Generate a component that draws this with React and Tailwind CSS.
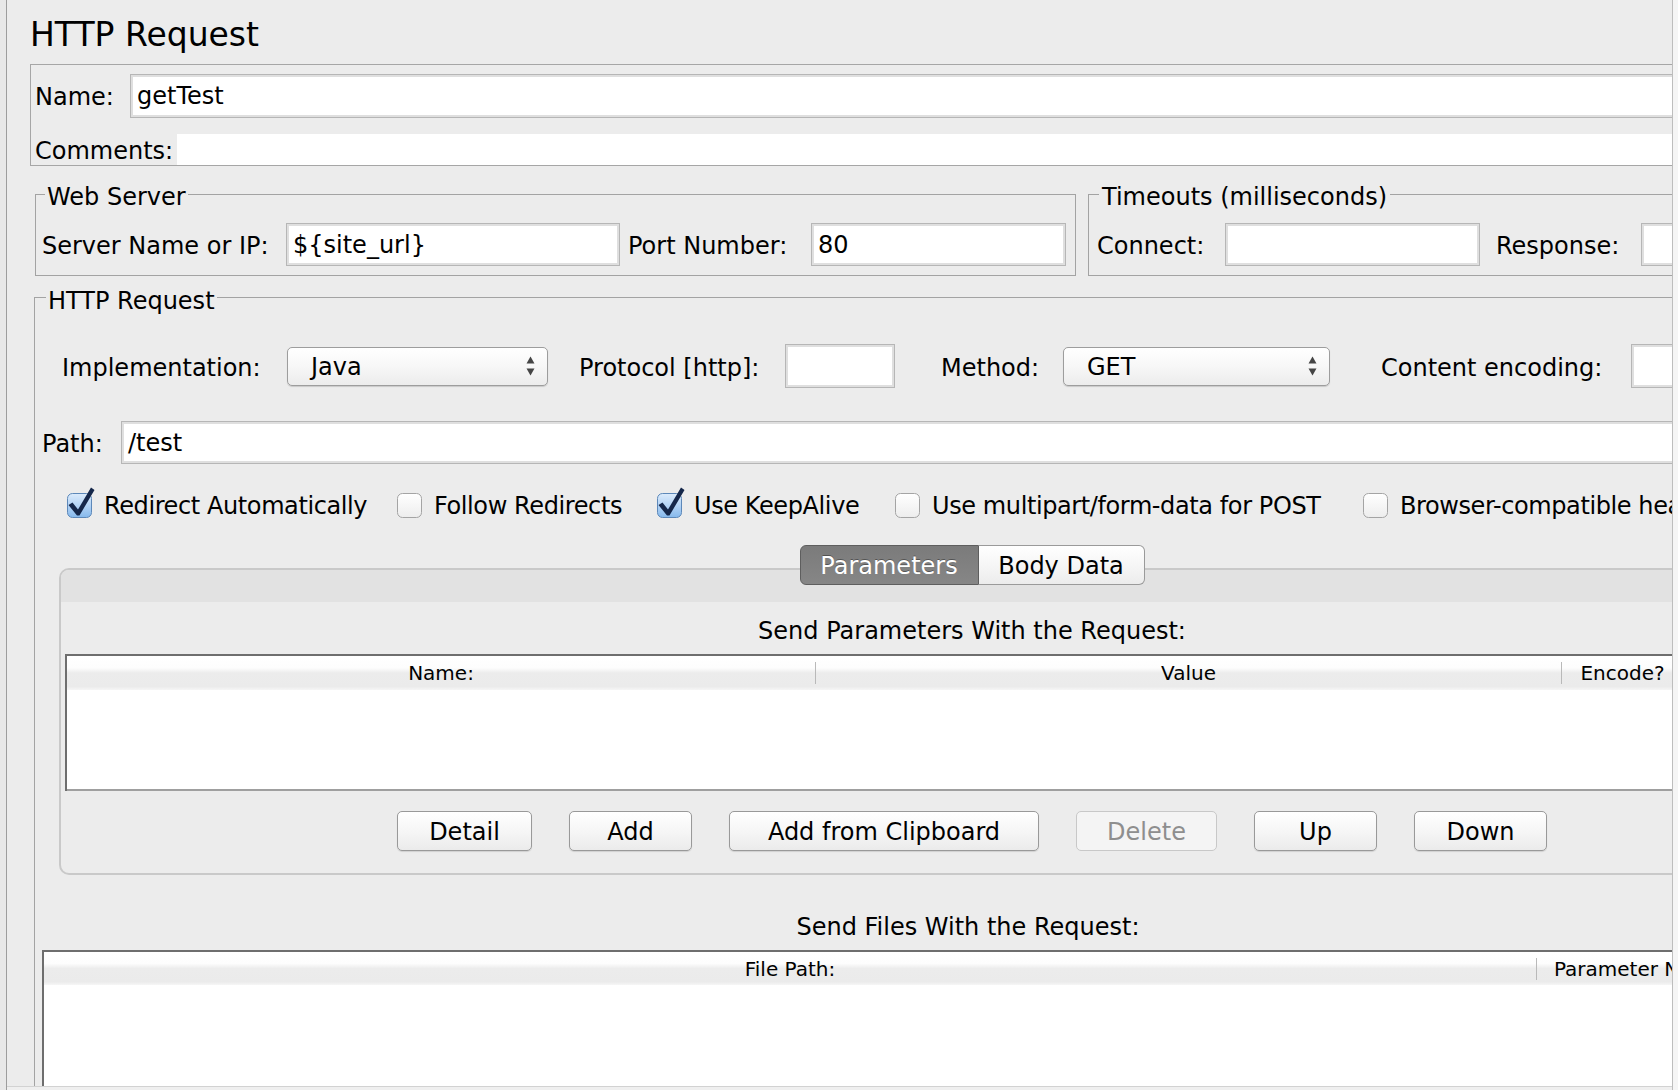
import { useId } from 'react';

const FONT = "font-['DejaVu_Sans',sans-serif]";

function TextField({ value = '', className = '' }) {
  return (
    <div className={`flex shrink-0 items-center border border-[#b6b6b6] bg-white pl-[6px] shadow-[inset_0_0_0_2px_#dfdfdf] ${className}`}>
      <span className="whitespace-nowrap">{value}</span>
    </div>
  );
}

function Select({ value, className = '' }) {
  return (
    <div className={`flex shrink-0 items-center justify-between rounded-[5px] border border-[#9d9d9d] bg-[linear-gradient(#ffffff,#f7f7f7_50%,#ececec)] pl-[23px] pr-[12px] shadow-[0_1px_1px_rgba(0,0,0,0.15)] ${className}`}>
      <span className="pt-[2px]">{value}</span>
      <svg width="9" height="20" viewBox="0 0 9 20">
        <polygon points="0.5,7.5 4.5,0.5 8.5,7.5" fill="#454545" />
        <polygon points="0.5,12.5 4.5,19.5 8.5,12.5" fill="#454545" />
      </svg>
    </div>
  );
}

function CheckBox({ checked }) {
  const id = useId();
  return (
    <svg width="25" height="25" viewBox="0 0 25 25" className="shrink-0 overflow-visible">
      <defs>
        <linearGradient id={id} x1="0" y1="0" x2="0" y2="1">
          {checked ? (
            <>
              <stop offset="0" stopColor="#dcebfb" />
              <stop offset="0.5" stopColor="#b3d3f5" />
              <stop offset="1" stopColor="#86b9ec" />
            </>
          ) : (
            <>
              <stop offset="0" stopColor="#ffffff" />
              <stop offset="1" stopColor="#ededed" />
            </>
          )}
        </linearGradient>
      </defs>
      <rect x="0.5" y="0.5" width="24" height="24" rx="5" fill={`url(#${id})`} stroke={checked ? '#5d88b9' : '#a4a4a4'} />
      {checked && <path d="M1.5 12 L5.5 9.5 L11 16.5 L24 -5.5 L27.5 -3 L12.5 22.5 L10 22.5 Z" fill="#15274a" />}
    </svg>
  );
}

function Option({ checked, label, className = '' }) {
  return (
    <div className={`flex shrink-0 items-center gap-[12px] whitespace-nowrap ${className}`}>
      <CheckBox checked={checked} />
      <span className="tracking-[-0.4px]">{label}</span>
    </div>
  );
}

function Button({ label, className = '', disabled }) {
  return (
    <div
      className={`flex h-[40px] shrink-0 items-center justify-center rounded-[5px] border pt-[2px] ${
        disabled
          ? 'border-[#c8c8c8] bg-[#f4f4f4] text-[#8e8e8e]'
          : 'border-[#999999] bg-[linear-gradient(#ffffff,#f5f5f5_55%,#ebebeb)] shadow-[0_1px_1px_rgba(0,0,0,0.12)]'
      } ${className}`}
    >
      {label}
    </div>
  );
}

const headerBg = 'bg-[linear-gradient(#ffffff_0%,#fdfdfd_35%,#ececec_50%,#ebebeb_90%,#f6f6f6_100%)]';

function ColSep() {
  return <div className="h-[22px] w-px shrink-0 bg-[#b9b9b9]" />;
}

export default function App() {
  return (
    <div className={`flex h-[1090px] w-[1678px] overflow-hidden bg-[#ececec] text-[24px] leading-[28px] text-black ${FONT}`}>
      <div className="w-[6px] shrink-0 bg-[#e8e8e8]" />
      <div className="w-px shrink-0 bg-[#9d9d9d]" />

      <div className="flex w-[1665px] shrink-0 flex-col">
        <div className="h-[1086px] overflow-hidden">
          <div className="w-[1937px]">
            {/* Title */}
            <div className="h-[55px] pl-[23px] pt-[15px] text-[33px] leading-[40px]">HTTP Request</div>

            {/* Name / comments */}
            <div className="ml-[23px] mt-[9px] w-[1884px] border border-[#a6a6a6] pl-[4px] pt-[9px]">
              <div className="flex h-[44px] items-center">
                <span className="w-[95px] shrink-0 pt-[2px]">Name:</span>
                <TextField value="getTest" className="h-full flex-1" />
              </div>
              <div className="mt-[16px] flex h-[31px] items-center">
                <span className="w-[142px] shrink-0 pt-[2px]">Comments:</span>
                <div className="h-full flex-1 bg-white" />
              </div>
            </div>

            {/* Web server + timeouts */}
            <div className="ml-[28px] mt-[16px] flex items-start">
              <fieldset className="w-[1041px] min-w-0 shrink-0 border border-[#a3a3a3] pb-[9px] pl-[6px] pt-[17px]">
                <legend className="ml-[3px] px-[2px] leading-[24px]">
                  <span className="relative top-[3px]">Web Server</span>
                </legend>
                <div className="flex h-[43px] items-center">
                  <span className="w-[244px] shrink-0 pt-[2px]">Server Name or IP:</span>
                  <TextField value="${site_url}" className="h-full w-[334px]" />
                  <span className="ml-[8px] w-[183px] shrink-0 pt-[2px]">Port Number:</span>
                  <TextField value="80" className="h-full w-[255px]" />
                </div>
              </fieldset>
              <fieldset className="ml-[12px] w-[826px] min-w-0 shrink-0 border border-[#a3a3a3] pb-[9px] pl-[8px] pt-[17px]">
                <legend className="ml-[2px] px-[3px] leading-[24px]">
                  <span className="relative top-[3px]">Timeouts (milliseconds)</span>
                </legend>
                <div className="flex h-[43px] items-center">
                  <span className="w-[128px] shrink-0 pt-[2px]">Connect:</span>
                  <TextField className="h-full w-[255px]" />
                  <span className="ml-[16px] w-[145px] shrink-0 pt-[2px]">Response:</span>
                  <TextField className="h-full w-[255px]" />
                </div>
              </fieldset>
            </div>

            {/* HTTP Request */}
            <fieldset className="ml-[27px] mt-[9px] w-[1880px] min-w-0 border border-[#a3a3a3] px-[5px] pt-[35px]">
              <legend className="ml-[6px] px-[2px] leading-[24px]">
                <span className="relative top-[4px]">HTTP Request</span>
              </legend>

              <div className="ml-[20px] flex h-[44px] items-center whitespace-nowrap">
                <span className="w-[227px] shrink-0 pl-[2px] pt-[3px]">Implementation:</span>
                <Select value="Java" className="h-[39px] w-[261px]" />
                <span className="ml-[31px] w-[206px] shrink-0 pt-[3px]">Protocol [http]:</span>
                <TextField className="h-full w-[110px]" />
                <span className="ml-[46px] w-[122px] shrink-0 pt-[3px]">Method:</span>
                <Select value="GET" className="h-[39px] w-[267px]" />
                <span className="ml-[51px] w-[250px] shrink-0 pt-[3px]">Content encoding:</span>
                <TextField className="h-full w-[200px]" />
              </div>

              <div className="mt-[33px] flex h-[43px] items-center">
                <span className="w-[81px] shrink-0 pl-[2px] pt-[2px]">Path:</span>
                <TextField value="/test" className="h-full flex-1" />
              </div>

              <div className="ml-[27px] mt-[29px] flex h-[25px] items-center">
                <Option checked label="Redirect Automatically" className="w-[330px]" />
                <Option label="Follow Redirects" className="w-[260px]" />
                <Option checked label="Use KeepAlive" className="w-[238px]" />
                <Option label="Use multipart/form-data for POST" className="w-[468px]" />
                <Option label="Browser-compatible headers" />
              </div>

              {/* Tabs */}
              <div className="relative z-10 ml-[19px] mt-[27px] flex h-[40px] w-[1826px] justify-center">
                <div className="flex h-[40px] w-[179px] items-center justify-center rounded-l-[6px] border border-[#5e5e5e] bg-[linear-gradient(#7b7b7b,#868686)] pt-[2px] text-white [text-shadow:0_-1px_0_rgba(0,0,0,0.35)]">
                  Parameters
                </div>
                <div className="flex h-[40px] w-[166px] items-center justify-center rounded-r-[6px] border border-l-0 border-[#9a9a9a] bg-[linear-gradient(#ffffff,#f4f4f4_60%,#ececec)] pt-[2px]">
                  Body Data
                </div>
              </div>

              <div className="ml-[19px] mt-[-17px] w-[1826px] overflow-hidden rounded-[10px] border-2 border-[#c9c9c9]">
                <div className="h-[32px] bg-[#e2e2e2]" />
                <div className="pt-[15px] text-center">Send Parameters With the Request:</div>
                <div className="ml-[4px] mt-[9px] w-[1814px] border-l-2 border-t-2 border-[#6e6e6e]">
                  <div className={`flex h-[34px] items-center text-[20px] ${headerBg}`}>
                    <div className="w-[748px] shrink-0 text-center">Name:</div>
                    <ColSep />
                    <div className="w-[745px] shrink-0 text-center">Value</div>
                    <ColSep />
                    <div className="w-[121px] shrink-0 text-center">Encode?</div>
                    <ColSep />
                    <div className="flex-1 text-center">Include Equals?</div>
                  </div>
                  <div className="h-[99px] bg-white" />
                  <div className="h-[2px] bg-[#9f9f9f]" />
                </div>
                <div className="mb-[22px] mt-[20px] flex justify-center gap-[37px]">
                  <Button label="Detail" className="w-[135px]" />
                  <Button label="Add" className="w-[123px]" />
                  <Button label="Add from Clipboard" className="w-[310px]" />
                  <Button label="Delete" className="w-[141px]" disabled />
                  <Button label="Up" className="w-[123px]" />
                  <Button label="Down" className="w-[133px]" />
                </div>
              </div>

              {/* Files */}
              <div className="mt-[36px] pr-[12px] pt-[2px] text-center">Send Files With the Request:</div>
              <div className="ml-[2px] mt-[9px] w-[1866px] border-l-2 border-t-2 border-[#6e6e6e]">
                <div className={`flex h-[33px] items-center text-[20px] ${headerBg}`}>
                  <div className="w-[1492px] shrink-0 text-center">File Path:</div>
                  <ColSep />
                  <div className="w-[210px] shrink-0 text-center">Parameter Name:</div>
                  <ColSep />
                  <div className="flex-1 text-center">MIME Type:</div>
                </div>
                <div className="h-[200px] bg-white" />
              </div>
            </fieldset>
          </div>
        </div>
        <div className="h-[4px] shrink-0 border-t border-[#d2d2d2] bg-[#efefef]" />
      </div>

      <div className="w-[6px] shrink-0 border-l border-[#bdbdbd] bg-[#f5f5f5]" />
    </div>
  );
}
